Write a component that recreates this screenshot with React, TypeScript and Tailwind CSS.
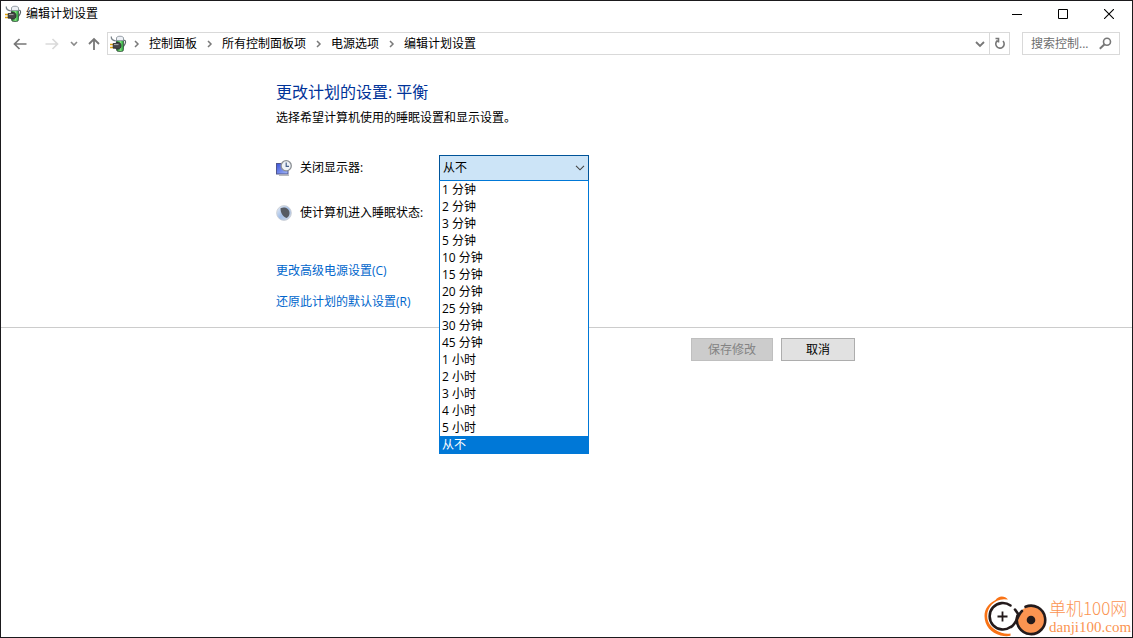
import React, { useState } from "react";

const crumbs = ["控制面板", "所有控制面板项", "电源选项", "编辑计划设置"];

const timeouts = [
  "1 分钟",
  "2 分钟",
  "3 分钟",
  "5 分钟",
  "10 分钟",
  "15 分钟",
  "20 分钟",
  "25 分钟",
  "30 分钟",
  "45 分钟",
  "1 小时",
  "2 小时",
  "3 小时",
  "4 小时",
  "5 小时",
  "从不",
];

function PowerIcon() {
  return (
    <svg width="17" height="18" viewBox="0 0 17 18" className="shrink-0" aria-hidden="true">
      <defs>
        <linearGradient id="cell" x1="0" y1="0" x2="1" y2="0">
          <stop offset="0" stopColor="#1d7a2c" />
          <stop offset=".55" stopColor="#7fe07a" />
          <stop offset="1" stopColor="#1c9a35" />
        </linearGradient>
      </defs>
      <path d="M1.300 1.500c-.2 2.500 1.500 4 4.500 4.300" fill="none" stroke="#7c858c" strokeWidth="1.300" />
      <path d="M13 5.500c2.800-1 3 1.500 2 3.500s-1.500 3-2.800 3.500" fill="none" stroke="#5c6468" strokeWidth="1.200" />
      <rect x="6.500" y="2" width="7" height="14.500" rx="2" fill="url(#cell)" stroke="#3d5544" strokeWidth=".8" />
      <path d="M6.500 5.500V3.500c0-1.500 1.200-2.300 3.500-2.300s3.500.8 3.500 2.300v2z" fill="#eef1f6" stroke="#8b93a0" strokeWidth=".8" />
      <path d="M0 9.500h3.500M0 12.500h3.500" stroke="#e0a410" strokeWidth="1.500" />
      <path d="M3.200 8.500h2l1.300-1h2c1.700 0 2.500 1.600 2.500 3.300s-1 3.200-2.500 3.200H6.500l-1.300-.8h-2z" fill="#454545" stroke="#242628" strokeWidth=".8" />
      <path d="M4 9.600h4.500" stroke="#a9a9a9" strokeWidth="1" />
    </svg>
  );
}

function DisplayIcon() {
  return (
    <svg width="16" height="16" viewBox="0 0 16 16" className="shrink-0" aria-hidden="true">
      <defs>
        <linearGradient id="screen" x1="0" y1="0" x2="1" y2="1">
          <stop offset="0" stopColor="#3b52d8" />
          <stop offset="1" stopColor="#a3b9fa" />
        </linearGradient>
      </defs>
      <rect x=".5" y="3.500" width="11.500" height="10.500" fill="url(#screen)" stroke="#50568c" />
      <path d="M3 15.200h10" stroke="#a6a9ae" strokeWidth="1.200" />
      <circle cx="10.200" cy="5.800" r="5.100" fill="#eef2f6" stroke="#8c9095" strokeWidth="1.300" />
      <path d="M10.200 2.500v3.800h2.800" fill="none" stroke="#47618a" strokeWidth="1.200" />
    </svg>
  );
}

function SleepIcon() {
  return (
    <svg width="16" height="16" viewBox="0 0 16 16" className="shrink-0" aria-hidden="true">
      <defs>
        <linearGradient id="moon" x1="0" y1="0" x2="1" y2="1">
          <stop offset="0" stopColor="#f1f4f7" />
          <stop offset=".5" stopColor="#a3bfe8" />
          <stop offset="1" stopColor="#d6dce4" />
        </linearGradient>
      </defs>
      <circle cx="8" cy="8" r="7.400" fill="url(#moon)" stroke="#c9cdd2" strokeWidth=".8" />
      <path d="M4.500 3.200c3.500-2 9-.2 9 4.800 0 2.300-1 4-2.800 5C7 12 4.500 8 4.500 3.200z" fill="#565b63" />
    </svg>
  );
}

function SiteLogo() {
  return (
    <svg width="64" height="42" viewBox="0 0 64 42" className="shrink-0" aria-hidden="true">
      <path d="M24 4.500C21 .5 14.500 0 11.500 5 4.500 8.500.5 14 .5 21c0 9.500 6.500 17 16 19.500 4 1 7.500 1 10 .3v-2.300c-3 .5-6 .2-9-.8C9 35 3.200 29 3.200 21 3.200 12 10 4.800 20 4.200z" fill="#f97316" />
      <path d="M26.500 10.500A13.200 13.200 0 1 0 26.500 32" fill="none" stroke="#231a1b" strokeWidth="2.600" strokeLinecap="round" />
      <path d="M18.500 16.500v10M13.500 21.500h10" stroke="#231a1b" strokeWidth="1.800" />
      <circle cx="47" cy="25" r="13.500" fill="#fb9451" />
      <path d="M41.500 11.800A14.200 14.200 0 1 1 33.500 20.500" fill="none" stroke="#231a1b" strokeWidth="2.600" strokeLinecap="round" />
      <path d="M27 32c5.500-3 6.500-12 11-16M31 14.500l3.500 5" fill="none" stroke="#231a1b" strokeWidth="2.600" strokeLinecap="round" />
      <circle cx="47" cy="25" r="4.300" fill="#231a1b" />
    </svg>
  );
}

function Separator() {
  return (
    <svg width="6" height="8" viewBox="0 0 6 8" className="shrink-0" aria-hidden="true">
      <path d="m1 1 3 3-3 3" fill="none" stroke="#7a7a7a" strokeWidth="1.500" />
    </svg>
  );
}

function TitleBar() {
  return (
    <header className="flex h-[26px] items-center justify-between pl-1">
      <div className="flex items-center gap-1">
        <PowerIcon />
        <h1>编辑计划设置</h1>
      </div>
      <div className="flex">
        <button aria-label="最小化" className="flex h-6 w-[46px] items-center justify-center">
          <svg width="10" height="10" viewBox="0 0 10 10"><path d="M0 5.500h10" stroke="#000" /></svg>
        </button>
        <button aria-label="最大化" className="flex h-6 w-[46px] items-center justify-center">
          <svg width="10" height="10" viewBox="0 0 10 10"><path d="M.5.5h9v9h-9z" fill="none" stroke="#000" /></svg>
        </button>
        <button aria-label="关闭" className="flex h-6 w-[46px] items-center justify-center">
          <svg width="10" height="10" viewBox="0 0 10 10"><path d="m0 0 10 10M10 0 0 10" stroke="#000" strokeWidth="1.100" /></svg>
        </button>
      </div>
    </header>
  );
}

function NavBar() {
  return (
    <nav className="mt-[5px] flex h-[23px] items-center pr-3">
      <div className="flex w-[106px] shrink-0 items-center justify-between pr-[7px] pl-3">
        <button aria-label="后退">
          <svg width="14" height="12" viewBox="0 0 14 12"><path d="M13.500 6H2M6.500 1 1.500 6l5 5" fill="none" stroke="#777" strokeWidth="1.700" /></svg>
        </button>
        <button aria-label="前进" className="ml-2">
          <svg width="14" height="12" viewBox="0 0 14 12"><path d="M.5 6H12M7.500 1l5 5-5 5" fill="none" stroke="#dadada" strokeWidth="1.700" /></svg>
        </button>
        <button aria-label="最近的位置" className="ml-[2px]">
          <svg width="8" height="6" viewBox="0 0 8 6"><path d="m1 1 3 3 3-3" fill="none" stroke="#8a8a8a" strokeWidth="1.600" /></svg>
        </button>
        <button aria-label="向上">
          <svg width="12" height="14" viewBox="0 0 12 14"><path d="M6 13V2M1 7l5-5 5 5" fill="none" stroke="#777" strokeWidth="1.800" /></svg>
        </button>
      </div>
      <div className="flex h-full min-w-0 flex-1 border border-[#d9d9d9]">
        <div className="flex min-w-0 flex-1 items-center pl-[2px]">
          <PowerIcon />
          <ol className="flex items-center pl-[7px]">
            {crumbs.map((crumb) => (
              <li key={crumb} className="mr-[10px] flex items-center gap-[9px] whitespace-nowrap">
                <Separator />
                <a href="#" className="leading-4">{crumb}</a>
              </li>
            ))}
          </ol>
        </div>
        <button aria-label="展开地址" className="flex w-[19px] items-center justify-center">
          <svg width="10" height="8" viewBox="0 0 10 8"><path d="m1 2 4 4 4-4" fill="none" stroke="#777" strokeWidth="1.800" /></svg>
        </button>
        <button aria-label="刷新" className="flex w-5 items-center justify-center border-l border-[#d9d9d9]">
          <svg width="12" height="13" viewBox="0 0 12 13"><path d="M3.500 3.500a4.200 4.200 0 1 0 5.500.5M1.500 1.500h3v4" fill="none" stroke="#777" strokeWidth="1.600" /></svg>
        </button>
      </div>
      <form className="ml-3 flex h-full w-[98px] items-center border border-[#d9d9d9] pr-[7px] pl-2">
        <input aria-label="搜索控制面板" placeholder="搜索控制..." className="h-4 min-w-0 flex-1 outline-none placeholder:text-[#6d6d6d]" />
        <svg width="13" height="13" viewBox="0 0 13 13" className="shrink-0" aria-hidden="true">
          <circle cx="8" cy="4.800" r="3.500" fill="none" stroke="#777" strokeWidth="1.600" />
          <path d="m5.600 7.200-4.800 4.600" stroke="#777" strokeWidth="2" />
        </svg>
      </form>
    </nav>
  );
}

export default function App() {
  const [timeout, setTimeoutValue] = useState("从不");

  return (
    <div className="relative flex min-h-screen flex-col border border-[#1b1a1d] bg-white font-['Open_Sans','Noto_Sans_CJK_SC',sans-serif] text-xs leading-4 text-black">
      <TitleBar />
      <NavBar />
      <main>
        <section className="border-b border-[#cccccc] px-4">
          <div className="mx-auto max-w-[581px] pt-[25px] pb-[17px]">
            <h2 className="text-base leading-6 text-[#003399]">更改计划的设置: 平衡</h2>
            <p className="mt-1 leading-5">选择希望计算机使用的睡眠设置和显示设置。</p>

            <div className="mt-[27px] flex h-[26px] items-center">
              <label htmlFor="display-off" className="flex w-[163px] items-center gap-2">
                <DisplayIcon />
                关闭显示器:
              </label>
              <div className="relative w-[150px]">
                <select
                  id="display-off"
                  value={timeout}
                  onChange={(e) => setTimeoutValue(e.target.value)}
                  className="block h-[26px] w-full appearance-none border border-[#005499] bg-[#cce4f7] pl-[3px] outline-none"
                >
                  {timeouts.map((t) => (
                    <option key={t}>{t}</option>
                  ))}
                </select>
                <svg width="10" height="6" viewBox="0 0 10 6" className="pointer-events-none absolute top-[10px] right-1" aria-hidden="true">
                  <path d="m1 .8 4 4 4-4" fill="none" stroke="#444" strokeWidth="1.100" />
                </svg>
                <ul role="listbox" aria-label="关闭显示器" className="absolute top-[25px] left-0 z-10 w-full border border-[#0078d7] bg-white">
                  {timeouts.map((t) => (
                    <li
                      key={t}
                      role="option"
                      aria-selected={t === timeout}
                      onClick={() => setTimeoutValue(t)}
                      className="h-[17px] pl-[2px] leading-[17px] aria-selected:bg-[#0078d7] aria-selected:text-white"
                    >
                      {t}
                    </li>
                  ))}
                </ul>
              </div>
            </div>

            <div className="mt-[19px] flex h-[26px] items-center gap-2">
              <SleepIcon />
              <span>使计算机进入睡眠状态:</span>
            </div>

            <div className="mt-[37px] flex flex-col items-start gap-[15px] text-[#0066cc]">
              <a href="#">更改高级电源设置(C)</a>
              <a href="#">还原此计划的默认设置(R)</a>
            </div>
          </div>
        </section>

        <section className="px-4">
          <div className="mx-auto flex max-w-[581px] justify-end gap-2 pt-[10px] pr-[2px]">
            <button disabled className="h-[23px] w-[82px] border border-[#bfbfbf] bg-[#cccccc] text-[#838383]">保存修改</button>
            <button className="h-[23px] w-[74px] border border-[#adadad] bg-[#e1e1e1]">取消</button>
          </div>
        </section>
      </main>

      <div className="absolute right-0 bottom-0 flex items-end text-[#fb9451]">
        <SiteLogo />
        <div className="flex w-[84px] flex-col pl-[1px]">
          <span className="font-['Noto_Sans_CJK_SC',sans-serif] text-[17px] leading-5 font-light whitespace-nowrap">单机100网</span>
          <span className="font-['Liberation_Serif',serif] text-[15px] leading-[19px] whitespace-nowrap">danji100.com</span>
        </div>
      </div>
    </div>
  );
}
